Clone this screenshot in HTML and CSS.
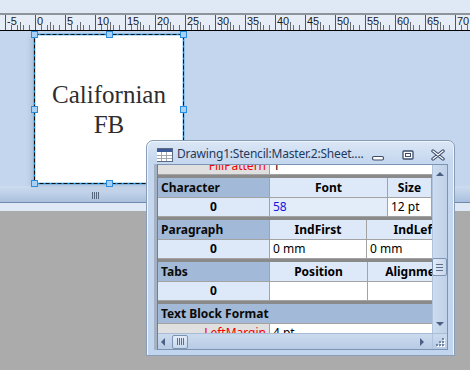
FILE: index.html
```html
<!DOCTYPE html>
<html>
<head>
<meta charset="utf-8">
<link rel="stylesheet" href="styles.css">
</head>
<body>
<div class="app">
  <div class="topstrip"></div>
  <div class="ruler">
    <span class="mj">-5</span><span class="mj">0</span><span class="mj">5</span><span class="mj">10</span><span class="mj">15</span><span class="mj">20</span><span class="mj">25</span><span class="mj">30</span><span class="mj">35</span><span class="mj">40</span><span class="mj">45</span><span class="mj">50</span><span class="mj">55</span><span class="mj">60</span><span class="mj">65</span><span class="mj">70</span>
  </div>
  <div class="canvas">
    <div class="shape">
      <div class="shape-text">Californian<br>FB</div>
      <svg class="selbox" width="160" height="160" viewBox="-5 -5 160 160">
        <rect x="0.5" y="0.5" width="149" height="149" fill="none" stroke="#1f9ce8" stroke-width="1.6"/>
        <rect x="0.5" y="0.5" width="149" height="149" fill="none" stroke="#111" stroke-width="1" stroke-dasharray="4 2"/>
        <g fill="#a9d0f5" stroke="#2a8de0" stroke-width="1">
          <rect x="-2.5" y="-2.5" width="6" height="6"/>
          <rect x="72.5" y="-2.5" width="6" height="6"/>
          <rect x="146.5" y="-2.5" width="6" height="6"/>
          <rect x="-2.5" y="72.5" width="6" height="6"/>
          <rect x="146.5" y="72.5" width="6" height="6"/>
          <rect x="-2.5" y="146.5" width="6" height="6"/>
          <rect x="72.5" y="146.5" width="6" height="6"/>
          <rect x="146.5" y="146.5" width="6" height="6"/>
        </g>
      </svg>
    </div>
  </div>
  <div class="hbar"><span class="grip"></span></div>
  <div class="strip"></div>
  <div class="greyarea"></div>
</div>

<div class="window">
  <div class="titlebar">
    <svg class="ticon" width="17" height="14" viewBox="0 0 17 14">
      <rect x="0.5" y="0.5" width="16" height="13" fill="#fff" stroke="#5a6a80"/>
      <rect x="1" y="1" width="15" height="3" fill="#3a5a9a"/>
      <g stroke="#a0a8b4" stroke-width="1">
        <line x1="1" y1="7.5" x2="16" y2="7.5"/>
        <line x1="1" y1="10.5" x2="16" y2="10.5"/>
        <line x1="5.5" y1="4" x2="5.5" y2="13"/>
        <line x1="10.5" y1="4" x2="10.5" y2="13"/>
      </g>
    </svg>
    <span class="title">Drawing1:Stencil:Master.2:Sheet....</span>
    <div class="wbtns">
      <span class="wbtn">
        <svg width="14" height="12" viewBox="0 0 14 12"><rect x="1.5" y="7.5" width="11" height="3.5" rx="1.5" fill="#fff" stroke="#3c4e6a" stroke-width="1.2"/></svg>
      </span>
      <span class="wbtn">
        <svg width="14" height="12" viewBox="0 0 14 12"><rect x="2" y="2" width="10" height="8" rx="1" fill="#fff" stroke="#3c4e6a" stroke-width="1.3"/><rect x="4.5" y="4.5" width="5" height="3" fill="none" stroke="#3c4e6a" stroke-width="1"/></svg>
      </span>
      <span class="wbtn">
        <svg width="14" height="12" viewBox="0 0 14 12"><path d="M2 2 L12 10 M12 2 L2 10" stroke="#3c4e6a" stroke-width="3.4" stroke-linecap="round"/><path d="M2 2 L12 10 M12 2 L2 10" stroke="#fff" stroke-width="1.2" stroke-linecap="round"/></svg>
      </span>
    </div>
  </div>
  <div class="client">
    <div class="upper">
      <div class="viewport">
        <div class="sheet">
          <div class="row data first-row">
            <div class="c c1 named red">FillPattern</div>
            <div class="c wide">1</div>
          </div>
          <div class="sep"></div>

          <div class="row head">
            <div class="c c1 section">Character</div>
            <div class="c cw118 colhead">Font</div>
            <div class="c cw44 colhead">Size</div>
          </div>
          <div class="row data">
            <div class="c c1 idx">0</div>
            <div class="c cw118 hl blue">58</div>
            <div class="c cw44">12 pt</div>
          </div>
          <div class="sep"></div>

          <div class="row head">
            <div class="c c1 section">Paragraph</div>
            <div class="c cw97 colhead">IndFirst</div>
            <div class="c cw98 colhead">IndLeft</div>
          </div>
          <div class="row data">
            <div class="c c1 idx">0</div>
            <div class="c cw97">0 mm</div>
            <div class="c cw98">0 mm</div>
          </div>
          <div class="sep"></div>

          <div class="row head">
            <div class="c c1 section">Tabs</div>
            <div class="c cw98 colhead">Position</div>
            <div class="c cw98 colhead">Alignment</div>
          </div>
          <div class="row data">
            <div class="c c1 idx">0</div>
            <div class="c cw98"></div>
            <div class="c cw98"></div>
          </div>
          <div class="sep"></div>

          <div class="row head">
            <div class="c full section">Text Block Format</div>
          </div>
          <div class="row data">
            <div class="c c1 named red">LeftMargin</div>
            <div class="c wide">4 pt</div>
          </div>
        </div>
      </div>
      <div class="vscroll">
        <span class="arr up"></span>
        <div class="vtrack"><span class="vthumb"><i></i><i></i><i></i></span></div>
        <span class="arr down"></span>
      </div>
    </div>
    <div class="lower">
      <div class="hscroll">
        <span class="arr left"></span>
        <span class="hthumb"><i></i><i></i><i></i><i></i></span>
        <span class="hspace"></span>
        <span class="arr right"></span>
      </div>
      <div class="sizegrip">
        <svg width="15" height="16" viewBox="0 0 15 16">
          <g fill="#fff"><rect x="10" y="5" width="2" height="2"/><rect x="7" y="8" width="2" height="2"/><rect x="10" y="8" width="2" height="2"/><rect x="4" y="11" width="2" height="2"/><rect x="7" y="11" width="2" height="2"/><rect x="10" y="11" width="2" height="2"/></g>
          <g fill="#6f86a6"><rect x="9" y="4" width="2" height="2"/><rect x="6" y="7" width="2" height="2"/><rect x="9" y="7" width="2" height="2"/><rect x="3" y="10" width="2" height="2"/><rect x="6" y="10" width="2" height="2"/><rect x="9" y="10" width="2" height="2"/></g>
        </svg>
      </div>
    </div>
  </div>
</div>
</body>
</html>
```

FILE: styles.css
```css
* { box-sizing: border-box; margin: 0; padding: 0; }
body {
  margin: 0;
  width: 470px;
  height: 370px;
  overflow: hidden;
  position: relative;
  background: #ababab;
  font-family: "Noto Sans", "Open Sans", sans-serif;
}
.app { display: flex; flex-direction: column; height: 370px; }
.topstrip { height: 13px; background: #dfe9f5; flex: none; }
.ruler {
  flex: none;
  height: 18px;
  border-top: 2px solid #8d949c;
  border-bottom: 1px solid #000;
  background-color: #e6edf6;
  background-image: repeating-linear-gradient(to right, transparent 0 5px, #6b6b6b 5px 6px);
  background-size: 100% 5px;
  background-position: 0 100%;
  background-repeat: no-repeat;
  display: flex;
  padding-left: 5px;
  overflow: hidden;
}
.mj {
  flex: none;
  width: 30px;
  height: 15px;
  border-left: 1px solid #555;
  padding-left: 1px;
  font-family: "Liberation Sans", sans-serif;
  font-size: 11px;
  line-height: 13px;
  color: #1a1a1a;
  background-image: linear-gradient(#6b6b6b, #6b6b6b);
  background-size: 1px 8px;
  background-position: 14px 100%;
  background-repeat: no-repeat;
}
.canvas { flex: none; height: 155px; background: #c4d6ee; position: relative; }
.shape {
  position: absolute;
  left: 34px;
  top: 3px;
  width: 150px;
  height: 150px;
  background: #fff;
  box-shadow: -3px 2px 5px rgba(60, 80, 110, 0.18);
  display: flex;
  align-items: center;
  justify-content: center;
}
.shape-text {
  font-family: "Liberation Serif", serif;
  font-size: 25px;
  line-height: 30px;
  text-align: center;
  color: #2d2d2d;
  margin-top: 2px;
}
.selbox { position: absolute; left: -5px; top: -5px; overflow: visible; }
.hbar {
  flex: none;
  height: 17px;
  background: linear-gradient(#cddcef, #b9cce5 60%, #a9bfdc);
  border-bottom: 1px solid #6e89ad;
  padding-left: 92px;
  padding-top: 6px;
}
.grip {
  display: block;
  width: 7px;
  height: 7px;
  background: repeating-linear-gradient(to right, #56667c 0 1px, transparent 1px 2px);
}
.strip { flex: none; height: 8px; background: #dfe9f5; }
.greyarea { flex: 1; background: #ababab; }

/* window */
.window {
  position: absolute;
  left: 146px;
  top: 140px;
  width: 309px;
  height: 216px;
  border: 1px solid #8a9db7;
  border-radius: 7px 7px 0 0;
  background: linear-gradient(#dbe7f6, #c6d8ef 20px, #c2d5ee);
  box-shadow: inset 1px 1px 0 #eef4fb, inset -1px 0 0 #eef4fb;
  padding: 0 6px 5px 10px;
  display: flex;
  flex-direction: column;
}
.titlebar { height: 23px; flex: none; display: flex; align-items: center; overflow: hidden; }
.ticon { flex: none; margin-left: -1px; margin-top: 4px; }
.title {
  margin-left: 4px;
  margin-top: 3px;
  font-size: 12px;
  line-height: 16px;
  color: #1f3a5e;
  white-space: nowrap;
  letter-spacing: -0.2px;
}
.wbtns { margin-left: auto; margin-right: 6px; display: flex; margin-top: 4px; }
.wbtn { width: 30px; height: 14px; display: flex; justify-content: center; align-items: center; }

.client {
  flex: 1;
  min-height: 0;
  border: 1px solid #7c93b2;
  border-left: 1px solid #6d7f98;
  box-shadow: -3px 0 0 #a4b2c4;
  display: flex;
  flex-direction: column;
  background: #fff;
  overflow: hidden;
}
.upper { flex: 1; display: flex; min-height: 0; }
.viewport { flex: 1; overflow: hidden; position: relative; background: #fff; }
.sheet { width: 330px; margin-top: -10px; font-size: 12px; color: #000; }
.row { display: flex; border-bottom: 1px solid #a3a3a3; }
.row.head { height: 20px; }
.row.data { height: 19px; }
.row.first-row { height: 20px; }
.first-row .c { padding-top: 2px; }
.c {
  flex: none;
  border-right: 1px solid #a3a3a3;
  line-height: 18px;
  padding: 0 3px;
  white-space: nowrap;
  overflow: hidden;
  background: #fff;
}
.c1 { width: 112px; }
.cw118 { width: 118px; }
.cw44 { width: 44px; }
.cw97 { width: 97px; }
.cw98 { width: 98px; }
.wide { width: 218px; }
.full { width: 330px; border-right: none; }
.section { background: #a2bad7; font-weight: bold; font-size: 12px; padding-left: 3px; line-height: 19px; color: #0a0a0a; }
.colhead { background: #dde9f8; font-weight: bold; font-size: 12px; text-align: center; line-height: 19px; }
.idx { background: #dde9f8; font-weight: bold; text-align: center; }
.c.hl { background: #e3edf9; }
.named { background: #e0e0e0; text-align: right; padding-right: 3px; }
.red { color: #f00000; }
.blue { color: #1515e0; }
.sep { height: 3px; background: #8a8a8a; }

.vscroll {
  flex: none;
  width: 15px;
  background: linear-gradient(to right, #cddcef, #bfd1e9);
  border-left: 1px solid #b0c3dc;
  display: flex;
  flex-direction: column;
  align-items: center;
}
.arr { display: block; width: 0; height: 0; border-style: solid; border-color: transparent; flex: none; }
.arr.up { margin-top: 7px; border-width: 0 4px 4px 4px; border-bottom-color: #4a5f82; }
.arr.down { margin-bottom: 7px; border-width: 4px 4px 0 4px; border-top-color: #4a5f82; }
.vtrack { flex: 1; width: 100%; }
.vthumb {
  display: flex;
  flex-direction: column;
  align-items: center;
  justify-content: center;
  gap: 2px;
  margin-top: 82px;
  height: 18px;
  width: 15px;
  margin-left: -1px;
  border: 1px solid #7d93b2;
  border-radius: 2px;
  background: linear-gradient(to right, #e3ecf8, #c7d7ec);
}
.vthumb i { display: block; width: 7px; height: 1px; background: #5c6f8c; }

.lower { flex: none; height: 16px; display: flex; border-top: 1px solid #a9bcd6; }
.hscroll {
  flex: 1;
  display: flex;
  align-items: center;
  background: linear-gradient(#cbdaee, #b8cbe5);
}
.arr.left { margin-left: 3px; border-width: 4px 4px 4px 0; border-right-color: #4a5f82; }
.arr.right { margin-right: 8px; border-width: 4px 0 4px 4px; border-left-color: #4a5f82; }
.hthumb {
  display: flex;
  gap: 1px;
  justify-content: center;
  align-items: center;
  margin-left: 7px;
  width: 16px;
  height: 14px;
  border: 1px solid #7d93b2;
  border-radius: 2px;
  background: linear-gradient(#e3ecf8, #c7d7ec);
}
.hthumb i { display: block; width: 1px; height: 7px; background: #5c6f8c; }
.hspace { flex: 1; }
.sizegrip { width: 15px; flex: none; background: linear-gradient(#cbdaee, #b8cbe5); border-left: 1px solid #b0c3dc; }
.sizegrip svg { display: block; }
```
